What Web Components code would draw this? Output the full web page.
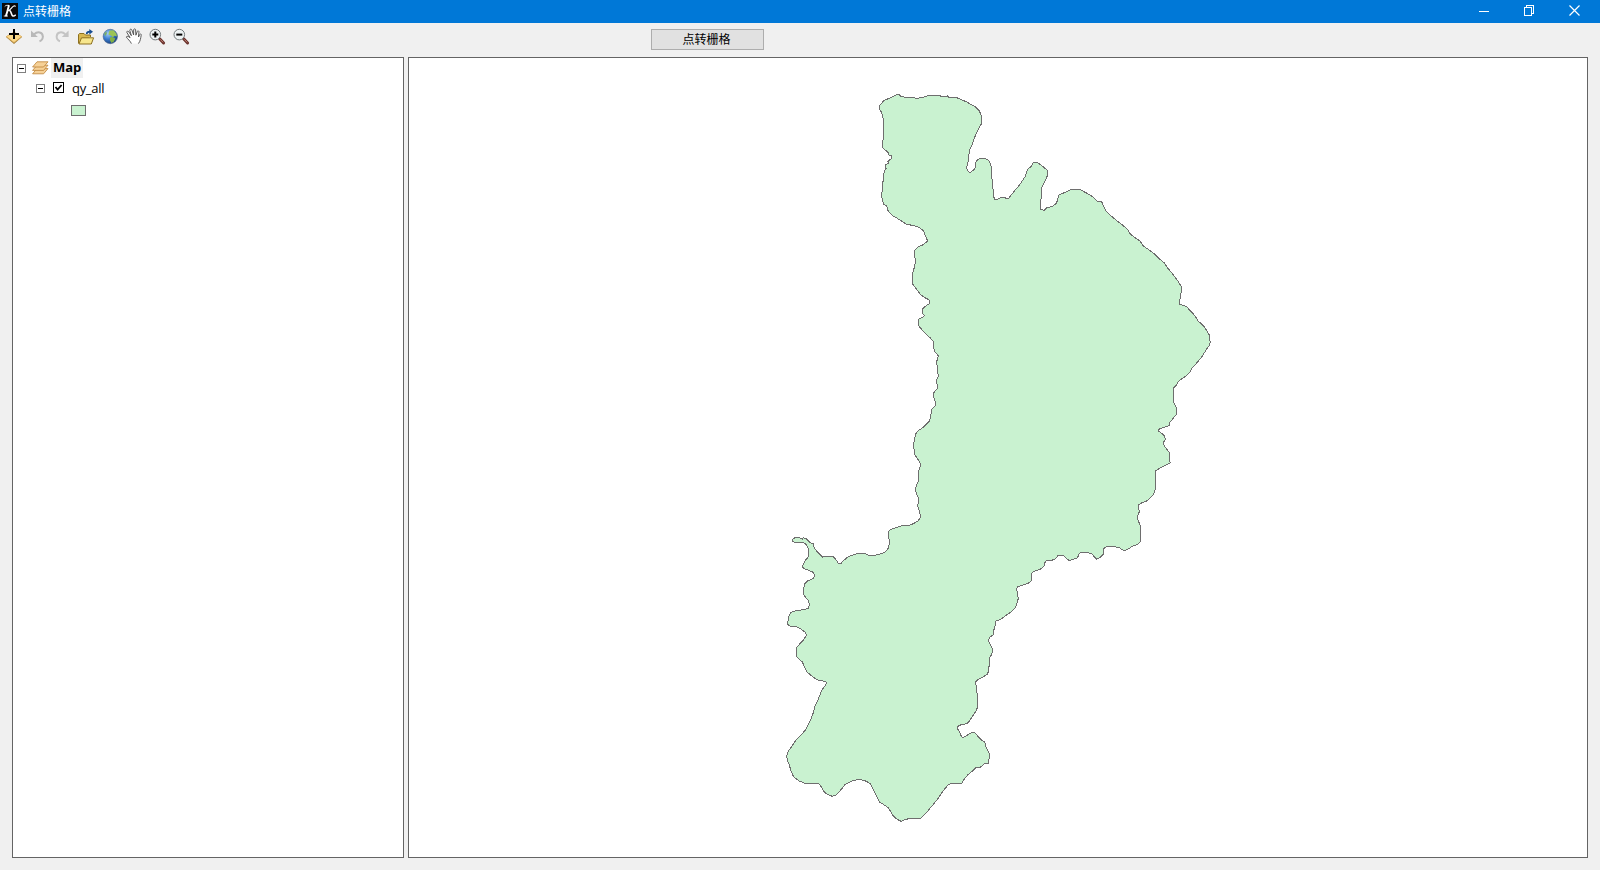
<!DOCTYPE html>
<html lang="zh-CN">
<head>
<meta charset="utf-8">
<title>点转栅格</title>
<style>
html,body{margin:0;height:100%;overflow:hidden;background:#f0f0f0}
body{font:12px/16px "Open Sans","Noto Sans CJK SC",sans-serif;color:#000}
</style>
</head>
<body>
<gis-window>
  <title-bar slot="title">点转栅格</title-bar>
  <gis-toolbar slot="tools"></gis-toolbar>
  <push-button slot="action">点转栅格</push-button>
  <layer-tree slot="side"></layer-tree>
  <map-view slot="main"></map-view>
</gis-window>
<script>
const define = (name, html, setup) => customElements.define(name, class extends HTMLElement {
  constructor() {
    super();
    this.attachShadow({ mode: 'open' }).innerHTML = html;
    if (setup) setup(this.shadowRoot);
  }
});

define('gis-window', `
<style>
:host{display:flex;flex-direction:column;width:100%;height:100vh;background:#f0f0f0}
.bar{height:34px;display:grid;grid-template-columns:651px 113px 1fr;flex:none}
.body{flex:1;min-height:0;display:grid;grid-template-columns:392px 1fr;column-gap:4px;padding:0 12px 12px}
</style>
<slot name="title"></slot>
<div class="bar"><slot name="tools"></slot><slot name="action"></slot></div>
<div class="body"><slot name="side"></slot><slot name="main"></slot></div>`);

define('title-bar', `
<style>
:host{display:flex;align-items:center;height:23px;flex:none;background:#0078d7;color:#fff}
.logo{width:16px;height:16px;background:#0a0a0a;margin:-1px 5px 0 2px;display:block}
.name{flex:1;height:23px;line-height:24px}
.ctl{display:flex;margin-top:-3px;margin-right:20px;gap:34px}
.ctl svg{width:11px;height:11px;display:block;fill:none;stroke:#fff}
</style>
<svg class="logo" viewBox="0 0 16 16"><g fill="none" stroke="#fff" stroke-linecap="round"><path d="M3 3.2C4 2 5.4 2.2 6.8 2.5" stroke-width=".9"/><path d="M6.8 2.8C6 6 5.4 9 4 12.6" stroke-width="1.9"/><path d="M2.2 13H5.6" stroke-width=".9"/><path d="M13.3 3.2C12 2 10.2 4.2 9.2 5.4C8.2 6.7 7.2 7.6 6 7.8" stroke-width="1.1"/><path d="M7.8 7.6C9.6 8.8 9.2 12.4 10.8 12.9C11.8 13.1 12.6 12.8 13.2 12.2" stroke-width="1.6"/></g></svg>
<span class="name"><slot></slot></span>
<div class="ctl">
<svg viewBox="0 0 11 11"><path d="M0 6.5H10"/></svg>
<svg viewBox="0 0 11 11"><path d="M.5 2.5H7.5V10.5H.5ZM2.5 2.5V.5H9.5V8.5H7.5" shape-rendering="crispEdges"/></svg>
<svg viewBox="0 0 11 11"><path d="M.5 .5L10.5 10.5M10.5 .5L.5 10.5" stroke-width="1.2"/></svg>
</div>`);

define('gis-toolbar', `
<style>
:host{display:flex;align-items:flex-start;gap:8px;padding:5px 0 0 6px;box-sizing:border-box}
svg{width:16px;height:17px;display:block;flex:none;overflow:visible}
svg:nth-of-type(n+7){margin-left:-1px;margin-right:1px}
</style>
<svg viewBox="0 0 16 17"><path d="M0 9L8 4.5L16 9L8 16Z" fill="#9c7a35"/><path d="M.3 8.6L8 4L15.7 8.6L8 14.6Z" fill="#fbd98a" stroke="#d9a857" stroke-width=".8"/><path d="M8 1V11M3 6H13" stroke="#000" stroke-width="2"/></svg>
<svg viewBox="0 0 16 17"><path d="M4.2 6.2C7.5 3 12.6 4 12.8 8.2C13 10.5 11.5 12.6 9.5 13.2" fill="none" stroke="#b9b9b9" stroke-width="2"/><path d="M1 2.5V9H7.8Z" fill="#b9b9b9"/></svg>
<svg viewBox="0 0 16 17"><path d="M11.3 6.2C8 3 2.9 4 2.7 8.2C2.5 10.5 4 12.6 6 13.2" fill="none" stroke="#c4c4c4" stroke-width="2"/><path d="M14.6 2.5V9H7.8Z" fill="#c4c4c4"/></svg>
<svg viewBox="0 0 16 17"><path d="M.5 15.5V6.5L1.5 5.5H6L7.5 7H12.5V9" fill="#d9b850" stroke="#8d7020"/><path d="M1 16L3.5 9.8H15.6L13.3 16Z" fill="#f7e68d" stroke="#8d7020"/><path d="M8.7 6C8.7 4.2 9.6 3.6 12 3.6" fill="none" stroke="#174d91" stroke-width="1.6"/><path d="M11.3 1L15 3.7L11.3 6.4Z" fill="#174d91"/></svg>
<svg viewBox="0 0 16 17"><defs><radialGradient id="g" cx=".35" cy=".3" r=".75"><stop stop-color="#a6cef7"/><stop offset=".5" stop-color="#3c7ed0"/><stop offset="1" stop-color="#143c7a"/></radialGradient></defs><circle cx="8.3" cy="8.5" r="7.2" fill="url(#g)" stroke="#49658c" stroke-width=".6"/><path d="M7.5 2.4L11.5 2.2L14.5 5.7L14.9 8.5L12.3 7.7L11 9.2L8.5 7.2L6.3 6.4Z" fill="#9cc455"/><path d="M8.2 9.2L10.4 9L13.4 10.5L11.8 13.5L9.5 15L7.8 12Z" fill="#83b045"/><path d="M2.2 5.4L4.5 3.2L4.8 5.7L3 8.2Z" fill="#79ae65"/></svg>
<svg viewBox="0 0 16 17"><path d="M5.4 15.6C4.8 13.5 1 10.4 .4 9.1C.4 8 2.2 8 4.1 9.7L.9 4.5C.5 3.2 1.9 2.6 2.7 3.7L5.4 7.7L3.8 2.5C3.7 .9 5.4 .7 5.9 2.1L7.6 6.9L7.7 1.7C8 .4 9.4 .6 9.6 1.8L9.9 7.2L11.3 3.4C12 2.4 13.2 2.9 12.9 4.2L12.5 9L13.6 6.6C14.4 5.5 15.4 6 15.2 7.2C14.6 10.2 14.5 13 12.4 15.6" fill="#fff" stroke="#4c4c4c" stroke-width=".9"/></svg>
<svg viewBox="0 0 16 17"><path d="M10.6 10.8L14.6 15" stroke="#69302a" stroke-width="3" stroke-linecap="round"/><path d="M11.3 11.4L14.2 14.4" stroke="#c18277" stroke-width="1"/><circle cx="6.3" cy="6.6" r="5.3" fill="#edf2f3" stroke="#747b7d"/><path d="M6.3 3.6V9.6M3.3 6.6H9.3" stroke="#000" stroke-width="2"/></svg>
<svg viewBox="0 0 16 17"><path d="M10.6 10.8L14.6 15" stroke="#69302a" stroke-width="3" stroke-linecap="round"/><path d="M11.3 11.4L14.2 14.4" stroke="#c18277" stroke-width="1"/><circle cx="6.3" cy="6.6" r="5.3" fill="#edf2f3" stroke="#747b7d"/><path d="M3.3 6.6H9.3" stroke="#000" stroke-width="2"/></svg>`);

define('push-button', `
<style>
:host{display:block;padding-top:6px}
button{display:block;width:113px;height:21px;box-sizing:border-box;border:1px solid #adadad;background:#e1e1e1;padding:0 2px 0 0;margin:0;font:inherit;color:#000;line-height:18px;text-align:center}
</style><button><slot></slot></button>`);

define('tree-toggle', `
<style>:host{display:block;width:9px;height:9px;flex:none}svg{display:block}</style>
<svg width="9" height="9" shape-rendering="crispEdges"><rect x=".5" y=".5" width="8" height="8" fill="#fff" stroke="#808080"/><path d="M2 4.5H7" stroke="#000"/></svg>`);

define('layer-tree', `
<style>
:host{display:block;box-sizing:border-box;border:1px solid #646464;background:#fff}
.row{display:flex;align-items:center;height:20px;font-size:13px;line-height:20px}
.root{padding-left:4px}.layer{padding-left:23px}
.root svg{margin:0 2px 0 6px}
b{background:#f0f0f0;padding:0 2px;height:20px;line-height:18px;letter-spacing:-.1px}
.check{margin:0 7px 0 8px}
.layer span{letter-spacing:-.3px;line-height:19px}
.swatch{margin:7px 0 0 58px;width:15px;height:11px;box-sizing:border-box;border:1px solid #6e6e6e;background:#c9f2d0}
</style>
<div class="row root"><tree-toggle></tree-toggle>
<svg width="17" height="14" viewBox="0 0 17 14"><g fill="#f6d197" stroke="#bd8136" stroke-width=".8" stroke-linejoin="round"><path d="M.6 12.8L5 7.6H16L11.6 12.8Z"/><path d="M.6 9.4L5 4.2H16L11.6 9.4Z"/><path d="M.6 6L5 .8H16L11.6 6Z"/></g></svg><b>Map</b></div>
<div class="row layer"><tree-toggle></tree-toggle>
<svg class="check" width="12" height="12" viewBox="0 0 12 12"><path d="M.5 .5H10.5V10.5H.5Z" fill="#fff" stroke="#000" shape-rendering="crispEdges"/><path d="M2.5 5L4.6 7.5L8.6 3" fill="none" stroke="#000" stroke-width="1.8"/></svg><span>qy_all</span></div>
<div class="swatch"></div>`);

// District boundary: stretches of [easting, northing, vertices in thirds of a pixel], clockwise.
const BOUNDARY = [
[860,80,'58,78 65,70 72,61 85,56 98,50 110,44 118,44 123,49 135,52 162,52 168,55 178,54 185,51 192,51 200,48 208,46 240,46 243,49 262,48 265,51 290,53 300,57 320,66 345,80 358,92 364,108 365,130 357,144 350,158 344,172 337,192 331,204 327,222 326,240 322,250 320,265 325,274 330,278 338,272 345,265 347,260 345,255 348,246 354,238 362,235 375,235 385,240 391,250 394,262 395,285 397,310 399,328 401,350 404,357 415,357 425,352 435,352 438,355 446,355 450,350 460,337 480,313 495,290 503,268 515,258 520,248 530,247 540,253 550,261 563,272 563,285 558,297 550,312 545,325 545,345 542,362 542,388 553,391 560,383 578,379 588,371 592,362 596,346 608,340 620,335 632,329 645,327 658,328 672,335 690,345 700,352 712,364'],
[1020,150,'240,154 245,155 248,163 254,175 258,183 270,195 282,205 297,217 310,227 324,240 330,251 345,263 360,273 370,288 385,298 400,309 415,324 433,339 443,354 455,368 465,382 475,395 483,408 485,420 482,432 481,445 479,450 479,463 488,466 500,470 505,476 517,488 528,502 533,512 545,522 553,530 561,543 568,555 569,570 571,575 568,586 560,597 552,610 545,621 535,633 525,645 515,656 510,666 500,676 485,687 475,694 470,705 461,714'],
[1000,380,'521,24 521,68 529,82 530,102 522,112 510,127 508,137 495,141 478,146 475,153 485,160 494,168 496,178 490,188 493,198 502,210 508,218 509,243 511,248 495,257 480,264 468,272 467,320 463,338 455,350 440,363 428,367 415,375 416,383 418,395 413,408 413,418 418,430 421,437 421,485 415,492 395,500 385,507 373,512 365,508 358,503 340,499 320,499 312,505 310,523 300,533 290,538 284,532 277,522 262,518 243,517 236,523 233,533 218,538 208,542 200,536 190,527 175,526 165,537 155,541 138,542 134,550 132,558 122,567 98,576 95,582 94,602 85,610 70,615 53,620 50,628 52,640 55,655 50,672 46,683 35,695 20,705 5,716'],
[940,560,'167,184 165,198 161,212 160,224 150,231 146,238 147,247 153,258 159,271 155,283 149,293 148,312 145,335 142,343 130,350 115,358 107,365 108,375 110,395 112,405 112,443 107,455 98,468 88,483 80,491 65,494 55,497 52,505 58,515 62,525 68,533 78,528 90,520 98,516 105,519 115,530 125,541 134,546 137,558 142,570 147,580 148,592 145,610 132,612 122,621 107,623 95,635 83,645 73,657'],
[770,670,'575,340 543,340 533,346 520,362 508,380 495,397 480,415 465,433 453,444 420,445 405,449 393,454 380,447 368,435 355,413 340,403 330,398 320,380 308,355 300,340 285,332 265,328 245,333 225,344 208,365 200,374 187,379 172,373 162,365 150,344 142,340 105,340 88,333 75,324 68,315 62,300 58,285 52,270 50,258 55,243 65,230 78,210 95,193 108,178 117,160 125,142 130,128 135,108 145,87 155,62 163,50 170,40 167,35 150,31'],
[770,520,'145,481 130,472 110,455 103,440 97,426 88,418 80,410 80,382 90,371 100,360 110,345 105,336 92,327 80,320 60,318 52,313 54,302 58,285 62,278 75,273 105,268 115,265 118,253 114,240 105,230 100,222 101,205 105,190 113,182 125,178 131,175 134,165 130,157 118,152 105,147 97,142 100,132 107,120 114,112 116,95 113,80 105,70 98,67 75,67 68,64 68,57 75,53 88,53 97,58 100,53 108,56 116,63 122,69 130,71 132,82 140,94 150,103 158,111 175,109 188,109 198,119 205,130 213,130 220,122 235,110 255,103 268,100 287,101 297,106 315,106 340,99 350,92 355,84 358,70 358,60 355,50 356,35 362,28 380,22 400,16 418,16 430,11 445,2'],
[860,300,'175,662 181,652 180,643 177,630 173,618 175,605 175,593 170,583 167,572 168,560 175,543 176,515 182,493 175,480 165,465 163,450 160,440 163,420 167,402 175,392 192,380 208,364 212,350 215,328 225,318 228,311 222,293 220,280 232,265 230,240 235,228 232,205 230,185 235,168 225,155 220,140 220,124 210,113 193,98 180,82 175,75 176,58 187,52 193,47 187,40 188,27 197,18 207,12 208,0'],
[860,80,'193,652 180,642 170,628 158,612 158,580 163,562 167,545 164,530 163,512 175,500 190,494 203,483 198,472 194,462 190,452 178,442 163,437 140,433 120,420 95,405 83,390 80,378 70,372 68,362 65,350 67,325 70,295 73,272 79,267 75,261 77,255 85,250 84,245 90,239 95,235 95,228 88,226 83,215 76,211 68,203 67,185 70,178 70,118 65,98 60,90']];

define('map-view', `
<style>
:host{display:block;box-sizing:border-box;border:1px solid #646464;background:#fff;overflow:hidden}
svg{display:block;width:100%;height:100%}
</style>
<svg viewBox="409 58 1178 799"><polygon fill="#c9f2d0" stroke="#6e6e6e" stroke-width="1" shape-rendering="crispEdges"/></svg>`,
root => root.querySelector('polygon').setAttribute('points', BOUNDARY.map(([ox, oy, run]) =>
  run.split(' ').map(p => { const [x, y] = p.split(','); return (ox + x / 3).toFixed(2) + ',' + (oy + y / 3).toFixed(2); }).join(' ')).join(' ')));
</script>
</body>
</html>
